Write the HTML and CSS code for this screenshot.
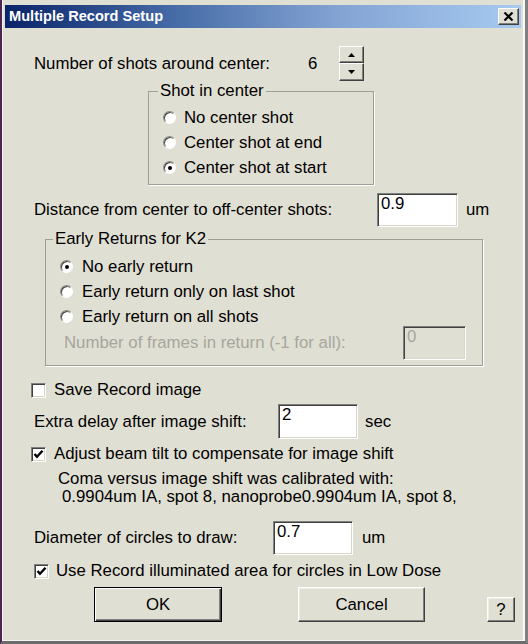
FILE: index.html
```html
<!DOCTYPE html>
<html>
<head>
<meta charset="utf-8">
<title>Multiple Record Setup</title>
<link rel="stylesheet" href="styles.css">
</head>
<body>
<div class="window">
  <div class="frame">
    <div class="titlebar">
      <span class="title">Multiple Record Setup</span>
      <span class="close-btn"><svg width="11" height="9" viewBox="0 0 11 9"><path d="M1.5 0.5 L9.5 8.5 M9.5 0.5 L1.5 8.5" stroke="#000" stroke-width="2.2" fill="none"/></svg></span>
    </div>
    <div class="client">
      <div class="row row-shots">
        <span class="label lbl-shots">Number of shots around center:</span>
        <span class="value">6</span>
        <div class="spin">
          <div class="spin-btn spin-up"><svg width="7" height="4" viewBox="0 0 7 4"><path d="M3.5 0 L7 4 L0 4 Z" fill="#000"/></svg></div>
          <div class="spin-btn spin-down"><svg width="7" height="4" viewBox="0 0 7 4"><path d="M0 0 L7 0 L3.5 4 Z" fill="#000"/></svg></div>
        </div>
      </div>

      <fieldset class="group group-center">
        <legend>Shot in center</legend>
        <div class="opt"><span class="radio"></span><span>No center shot</span></div>
        <div class="opt"><span class="radio"></span><span>Center shot at end</span></div>
        <div class="opt"><span class="radio checked"></span><span>Center shot at start</span></div>
      </fieldset>

      <div class="row row-distance">
        <span class="label lbl-distance">Distance from center to off-center shots:</span>
        <span class="edit edit-distance">0.9</span>
        <span class="unit unit-distance">um</span>
      </div>

      <fieldset class="group group-early">
        <legend>Early Returns for K2</legend>
        <div class="opt"><span class="radio checked"></span><span>No early return</span></div>
        <div class="opt"><span class="radio"></span><span>Early return only on last shot</span></div>
        <div class="opt"><span class="radio"></span><span>Early return on all shots</span></div>
        <div class="row row-frames">
          <span class="label lbl-frames disabled">Number of frames in return (-1 for all):</span>
          <span class="edit edit-frames disabled-edit">0</span>
        </div>
      </fieldset>

      <div class="row row-check row-save">
        <span class="check"></span><span>Save Record image</span>
      </div>

      <div class="row row-delay">
        <span class="label lbl-delay">Extra delay after image shift:</span>
        <span class="edit edit-delay">2</span>
        <span class="unit unit-delay">sec</span>
      </div>

      <div class="row row-check row-adjust">
        <span class="check checked"><svg width="13" height="13" viewBox="0 0 13 13"><path d="M2.5 6 L5 8.8 L10.5 2.8" stroke="#000" stroke-width="2.4" fill="none"/></svg></span><span>Adjust beam tilt to compensate for image shift</span>
      </div>

      <div class="note note-1">Coma versus image shift was calibrated with:</div>
      <div class="note note-2">0.9904um IA, spot 8, nanoprobe0.9904um IA, spot 8,</div>

      <div class="row row-diameter">
        <span class="label lbl-diameter">Diameter of circles to draw:</span>
        <span class="edit edit-diameter">0.7</span>
        <span class="unit unit-diameter">um</span>
      </div>

      <div class="row row-check row-use">
        <span class="check checked"><svg width="13" height="13" viewBox="0 0 13 13"><path d="M2.5 6 L5 8.8 L10.5 2.8" stroke="#000" stroke-width="2.4" fill="none"/></svg></span><span>Use Record illuminated area for circles in Low Dose</span>
      </div>

      <div class="row row-buttons">
        <span class="btn btn-ok">OK</span>
        <span class="btn btn-cancel">Cancel</span>
        <span class="btn btn-help">?</span>
      </div>
    </div>
  </div>
</div>
</body>
</html>
```

FILE: styles.css
```css
* { box-sizing: border-box; }
html, body { margin: 0; padding: 0; }
body {
  width: 528px;
  height: 644px;
  overflow: hidden;
  background: #e0dfd3;
  font-family: "Liberation Sans", Arial, sans-serif;
  font-size: 16.8px;
  color: #000;
}
.window {
  width: 528px;
  height: 644px;
  background: #e0dfd3;
  border-left: 2px solid #4e2452;
  border-right: 3px solid #808080;
  border-bottom: 3px solid #6c6c6c;
}
.frame {
  height: 100%;
  display: flex;
  flex-direction: column;
  border-left: 1px solid #f4f4f0;
  border-right: 2px solid #f8f8f6;
  border-bottom: 1px solid #f4f4f0;
}
.titlebar {
  margin: 5px 2px 0 2px;
  height: 23px;
  display: flex;
  align-items: center;
  justify-content: space-between;
  padding: 0 2px 0 4px;
  background: linear-gradient(to right, #0a246a 0%, #4a70aa 35%, #84a4d4 65%, #a6caf0 100%);
}
.title {
  color: #fff;
  font-weight: bold;
  font-size: 14.6px;
  line-height: 23px;
}
.close-btn {
  width: 21px;
  height: 17px;
  display: flex;
  align-items: center;
  justify-content: center;
  background: #e0dfd3;
  border: 1px solid;
  border-color: #fff #404040 #404040 #fff;
  box-shadow: inset -1px -1px 0 #808080;
}
.client {
  padding-left: 28px;
  display: flex;
  flex-direction: column;
  align-items: flex-start;
}
.row { display: flex; align-items: center; }

.row-shots { margin-top: 18px; height: 35px; }
.lbl-shots { margin-left: 3px; width: 274px; }
.value { width: 31px; }
.spin { display: flex; flex-direction: column; width: 25px; }
.spin-btn {
  display: flex;
  align-items: center;
  justify-content: center;
  background: #e0dfd3;
  border: 1px solid;
  border-color: #fff #404040 #404040 #fff;
  box-shadow: inset -1px -1px 0 #808080;
}
.spin-up { height: 17px; }
.spin-down { height: 18px; }

.group {
  margin: 0;
  min-width: 0;
  border: 1px solid #a09f97;
  box-shadow: 1px 1px 0 #fff;
}
.group legend {
  padding: 0 2px;
  line-height: 18px;
  height: 18px;
}
.opt { display: flex; align-items: center; height: 25px; }
.radio {
  position: relative;
  width: 13px;
  height: 13px;
  border-radius: 50%;
  background: #fff;
  border: 1px solid;
  border-color: #8a8980 #fff #fff #8a8980;
  box-shadow: inset 1px 1px 0 #404040;
  margin-right: 8px;
  flex: none;
}
.radio.checked::after {
  content: "";
  position: absolute;
  left: 3.5px;
  top: 3.5px;
  width: 4px;
  height: 4px;
  border-radius: 50%;
  background: #000;
}

.group-center {
  margin-top: 1px;
  margin-left: 117px;
  width: 226px;
  padding: 5px 4px 4px 14px;
}
.group-center legend { margin-left: -5px; }

.row-distance { margin-top: 8px; height: 34px; }
.lbl-distance { margin-left: 3px; width: 343px; }
.edit {
  display: block;
  height: 34px;
  padding: 1px 3px;
  line-height: 18px;
  background: #fff;
  border: 1px solid;
  border-color: #808080 #fff #fff #808080;
  box-shadow: inset 1px 1px 0 #404040, inset -1px -1px 0 #d8d6cb;
}
.edit-distance { width: 81px; }
.unit-distance { margin-left: 8px; }

.group-early {
  margin-top: 3px;
  margin-left: 14px;
  width: 438px;
  padding: 6px 4px 5px 14px;
}
.group-early legend { margin-left: -7px; }
.group-early .radio { margin-right: 9px; }
.row-frames { margin-top: -3px; height: 34px; }
.lbl-frames { margin-left: 4px; width: 339px; }
.disabled { color: #a7a69e; }
.edit-frames { width: 63px; }
.disabled-edit { background: #e0dfd3; color: #a7a69e; }

.row-check { height: 20px; }
.check {
  width: 15px;
  height: 15px;
  flex: none;
  display: flex;
  align-items: center;
  justify-content: center;
  background: #fff;
  border: 1px solid;
  border-color: #808080 #fff #fff #808080;
  box-shadow: inset 1px 1px 0 #404040, inset -1px -1px 0 #d8d6cb;
  margin-right: 8px;
}
.row-save { margin-top: 14px; }

.row-delay { margin-top: 4px; height: 35px; }
.lbl-delay { margin-left: 3px; width: 244px; }
.edit-delay { width: 80px; height: 35px; }
.unit-delay { margin-left: 7px; }

.row-adjust { margin-top: 5px; }
.note { line-height: 18px; }
.note-1 { margin-top: 6px; margin-left: 27px; }
.note-2 { margin-left: 31px; }

.row-diameter { margin-top: 15px; height: 34px; }
.lbl-diameter { margin-left: 3px; width: 239px; }
.edit-diameter { width: 80px; }
.unit-diameter { margin-left: 9px; }

.row-use { margin-top: 6px; margin-left: 3px; }
.row-use .check { margin-right: 7px; }

.row-buttons { margin-top: 6px; align-items: flex-end; }
.btn {
  display: flex;
  align-items: center;
  justify-content: center;
  background: #e0dfd3;
  border: 1px solid;
  border-color: #fff #404040 #404040 #fff;
  box-shadow: inset -1px -1px 0 #808080, inset 1px 1px 0 #eeede6;
}
.btn-ok {
  margin-left: 63px;
  width: 128px;
  height: 35px;
  border: 1px solid #000;
  box-shadow: inset 1px 1px 0 #fff, inset -1px -1px 0 #404040, inset -2px -2px 0 #808080;
}
.btn-cancel { margin-left: 76px; width: 127px; height: 35px; }
.btn-help { margin-left: 62px; width: 28px; height: 25px; }
```
